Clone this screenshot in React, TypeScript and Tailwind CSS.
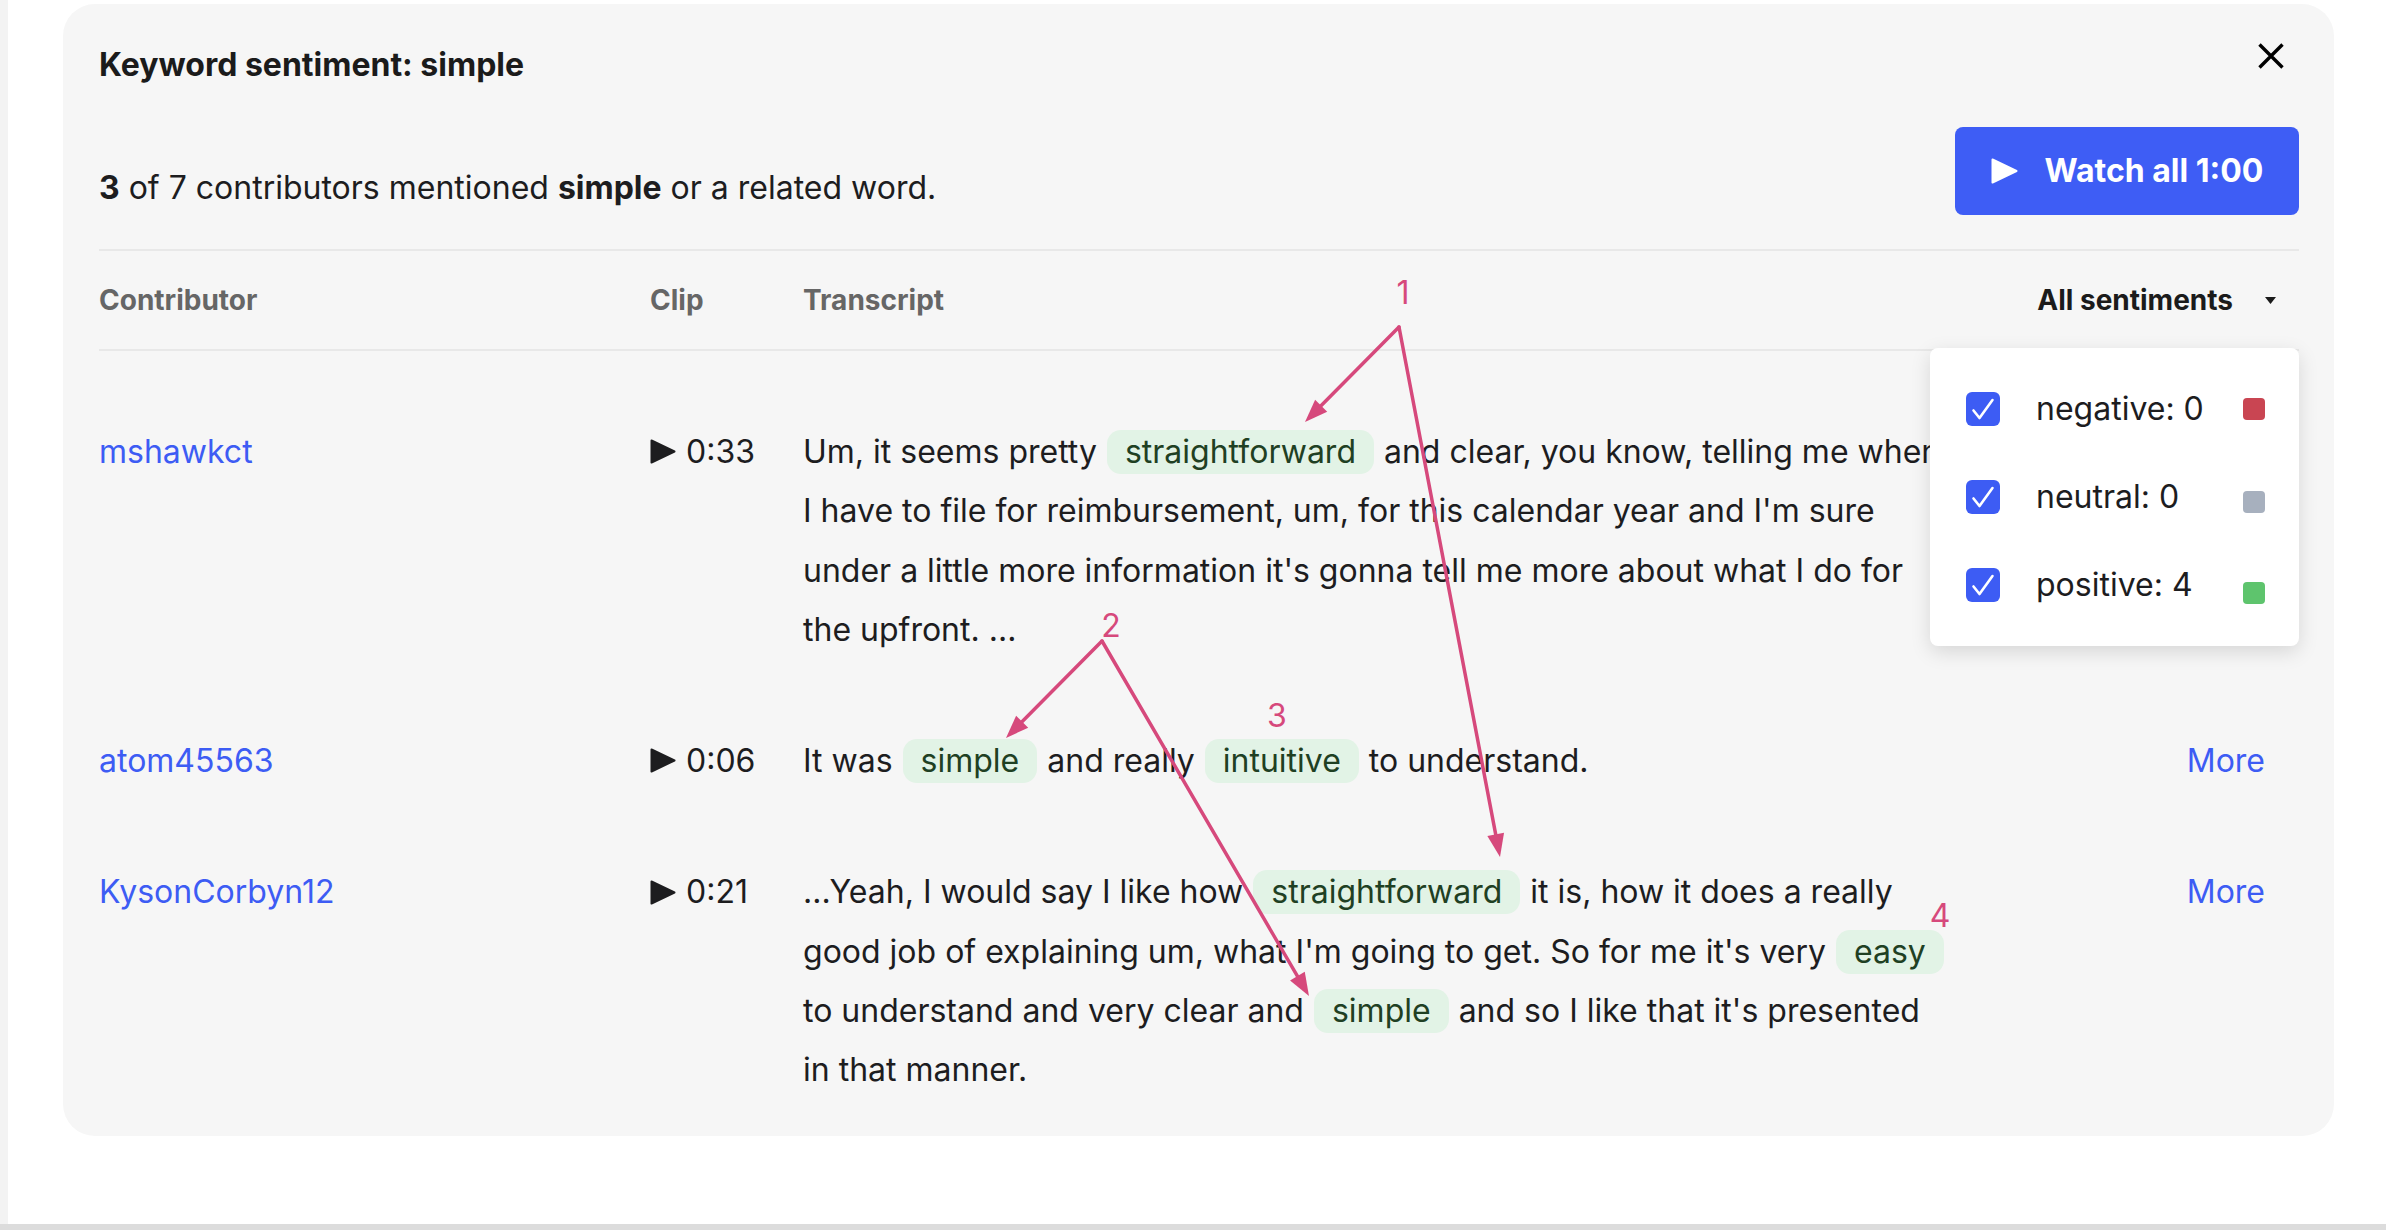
import React from "react";

// types
type Segment = { text: string; chip?: boolean };

type Row = {
  contributor: string;
  clip: string;
  lines: Segment[][];
};

const t = (text: string): Segment => ({ text });
const c = (text: string): Segment => ({ text, chip: true });

const rows: Row[] = [
  {
    contributor: "mshawkct",
    clip: "0:33",
    lines: [
      [t("Um, it seems pretty "), c("straightforward"), t(" and clear, you know, telling me when")],
      [t("I have to file for reimbursement, um, for this calendar year and I'm sure")],
      [t("under a little more information it's gonna tell me more about what I do for")],
      [t("the upfront. ...")],
    ],
  },
  {
    contributor: "atom45563",
    clip: "0:06",
    lines: [[t("It was "), c("simple"), t(" and really "), c("intuitive"), t(" to understand.")]],
  },
  {
    contributor: "KysonCorbyn12",
    clip: "0:21",
    lines: [
      [t("...Yeah, I would say I like how "), c("straightforward"), t(" it is, how it does a really")],
      [t("good job of explaining um, what I'm going to get. So for me it's very "), c("easy")],
      [t("to understand and very clear and "), c("simple"), t(" and so I like that it's presented")],
      [t("in that manner.")],
    ],
  },
];

const sentiments = [
  { label: "negative: 0", color: "bg-[#c94552]", offset: "mt-0" },
  { label: "neutral: 0", color: "bg-[#a7b0be]", offset: "mt-[10px]" },
  { label: "positive: 4", color: "bg-[#5ec46d]", offset: "mt-[16px]" },
];

const PlayIcon = ({ className }: { className?: string }) => (
  <svg viewBox="0 0 26 25" className={className}>
    <path d="M1.5 1.5 L24.5 12.5 L1.5 23.5 Z" fill="currentColor" stroke="currentColor" strokeWidth="2" strokeLinejoin="round" />
  </svg>
);

const Transcript = ({ lines }: { lines: Segment[][] }) => (
  <div className="w-[1157px] whitespace-pre leading-[59.3px]">
    {lines.map((line, i) => (
      <div key={i}>
        {line.map((seg, j) =>
          seg.chip ? (
            <span
              key={j}
              className="mx-[1px] inline-block rounded-[14px] bg-[#e2f3e6] px-[18px] leading-[44px] text-[#1f4023]"
            >
              {seg.text}
            </span>
          ) : (
            <span key={j}>{seg.text}</span>
          )
        )}
      </div>
    ))}
  </div>
);

const SentimentMenu = () => (
  <div className="absolute right-0 top-[97px] z-10 w-[369px] rounded-[8px] bg-white py-[17px] font-normal shadow-[0_6px_20px_rgba(0,0,0,0.13)]">
    {sentiments.map((s) => (
      <div key={s.label} className="flex h-[88px] items-center pl-[36px] pr-[34px]">
        <span className="flex h-[34px] w-[34px] items-center justify-center rounded-[6px] bg-[#3d5cf4]">
          <svg viewBox="0 0 34 34" className="h-[34px] w-[34px]">
            <path d="M7.5 18.5 L13.5 26 L26.5 8" fill="none" stroke="white" strokeWidth="2.6" strokeLinecap="round" strokeLinejoin="round" />
          </svg>
        </span>
        <span className="ml-[36px] flex-1 text-[32px] font-normal leading-[40px] text-[#1d1d1f]">{s.label}</span>
        <span className={`h-[22px] w-[22px] rounded-[4px] ${s.color} ${s.offset}`} />
      </div>
    ))}
  </div>
);

// annotation arrows drawn on top of the screenshot
const Arrow = ({ x1, y1, x2, y2 }: { x1: number; y1: number; x2: number; y2: number }) => {
  const len = Math.hypot(x2 - x1, y2 - y1);
  const ux = (x2 - x1) / len;
  const uy = (y2 - y1) / len;
  const head = 23;
  const half = 8.5;
  const bx = x2 - ux * head;
  const by = y2 - uy * head;
  const points = `${x2},${y2} ${bx - uy * half},${by + ux * half} ${bx + uy * half},${by - ux * half}`;
  return (
    <g>
      <line x1={x1} y1={y1} x2={bx + ux * 2} y2={by + uy * 2} stroke="#d6497c" strokeWidth="3.5" strokeLinecap="round" />
      <polygon points={points} fill="#d6497c" />
    </g>
  );
};

const Annotations = () => (
  <svg className="pointer-events-none absolute left-0 top-0 z-20 h-[1230px] w-[2386px]" viewBox="0 0 2386 1230">
    <g fill="#d6497c" fontFamily="Inter, sans-serif" fontSize="32" textAnchor="middle">
      <text x="1403" y="304">1</text>
      <text x="1111" y="637">2</text>
      <text x="1277" y="727">3</text>
      <text x="1940" y="927">4</text>
    </g>
    <Arrow x1={1399} y1={327} x2={1305} y2={422} />
    <Arrow x1={1399} y1={327} x2={1500} y2={857} />
    <Arrow x1={1102} y1={641} x2={1006} y2={738} />
    <Arrow x1={1102} y1={641} x2={1309} y2={996} />
  </svg>
);

export default function App() {
  return (
    <div className="relative flex h-[1230px] w-[2386px] flex-col overflow-hidden bg-white font-['Inter',sans-serif] text-[#1d1d1f]">
      <div className="flex flex-1">
        <div className="w-[8px] bg-[#f3f3f3]" />
        <div className="pl-[55px] pt-[4px]">
          <section className="w-[2271px] rounded-[32px] bg-[#f6f6f6] pl-[36px] pr-[35px] pt-[39px]">
            {/* header */}
            <div className="flex items-start justify-between">
              <h2 className="mt-[2px] text-[32px] font-bold leading-[40px] text-[#1b1b1b]">Keyword sentiment: simple</h2>
              <button className="mr-[15px] h-[26px] w-[26px] text-black">
                <svg viewBox="0 0 26 26" className="h-[26px] w-[26px]">
                  <path d="M1.5 1.5 L24.5 24.5 M24.5 1.5 L1.5 24.5" stroke="currentColor" strokeWidth="3.4" />
                </svg>
              </button>
            </div>

            {/* summary */}
            <div className="mt-[42px] flex items-start justify-between">
              <p className="mt-[41px] text-[32px] leading-[40px] text-[#1d1d1f]">
                <b>3</b> of 7 contributors mentioned <b>simple</b> or a related word.
              </p>
              <button className="flex h-[88px] w-[344px] items-center justify-center gap-[27px] rounded-[8px] bg-[#3e5df5] text-white">
                <svg viewBox="0 0 27 26" className="h-[26px] w-[27px]">
                  <path d="M1.5 1.5 L25.5 13 L1.5 24.5 Z" fill="white" stroke="white" strokeWidth="2" strokeLinejoin="round" />
                </svg>
                <span className="text-[32px] font-bold leading-[40px]">Watch all 1:00</span>
              </button>
            </div>

            {/* table */}
            <div className="mt-[34px] border-t-2 border-[#e8e8e8]">
              <div className="relative flex h-[100px] items-center border-b-2 border-[#e8e8e8] text-[28px] font-bold leading-[36px]">
                <div className="w-[551px] text-[#666666]">Contributor</div>
                <div className="w-[153px] text-[#666666]">Clip</div>
                <div className="w-[1157px] text-[#666666]">Transcript</div>
                <div className="flex flex-1 items-center justify-end pr-[23px] text-[#1b1b1b]">
                  <span>All sentiments</span>
                  <svg viewBox="0 0 11 7" className="ml-[32px] h-[7px] w-[11px]">
                    <path d="M0 0 H11 L5.5 7 Z" fill="#1b1b1b" />
                  </svg>
                </div>
                <SentimentMenu />
              </div>

              <div className="pt-[35px] text-[32px]">
                {rows.map((row) => (
                  <div key={row.contributor} className="flex items-start py-[36px] leading-[59.3px]">
                    <div className="w-[551px] text-[#3d5cf4]">{row.contributor}</div>
                    <div className="flex h-[59.3px] w-[153px] items-center gap-[10px]">
                      <PlayIcon className="h-[25px] w-[26px] text-[#1d1d1f]" />
                      <span>{row.clip}</span>
                    </div>
                    <Transcript lines={row.lines} />
                    <div className="flex-1 pr-[34px] text-right text-[#3d5cf4]">More</div>
                  </div>
                ))}
              </div>
            </div>
          </section>
        </div>
      </div>
      <div className="h-[6px] bg-[#dcdcdc]" />
      <Annotations />
    </div>
  );
}
